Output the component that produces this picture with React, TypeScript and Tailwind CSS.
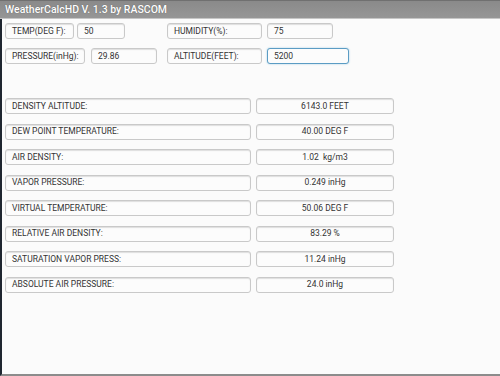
import React from 'react';

const results: [string, string][] = [
    ['DENSITY ALTITUDE:', '6143.0 FEET'],
    ['DEW POINT TEMPERATURE:', '40.00 DEG F'],
    ['AIR DENSITY:', '1.02  kg/m3'],
    ['VAPOR PRESSURE:', '0.249 inHg'],
    ['VIRTUAL TEMPERATURE:', '50.06 DEG F'],
    ['RELATIVE AIR DENSITY:', '83.29 %'],
    ['SATURATION VAPOR PRESS:', '11.24 inHg'],
    ['ABSOLUTE AIR PRESSURE:', '24.0 inHg'],
];

function Box({
    children,
    className = '',
    focused = false,
}: {
    children: React.ReactNode;
    className?: string;
    focused?: boolean;
}) {
    return (
        <div
            className={`flex h-[16px] items-center rounded-[3px] bg-[#fcfcfc] px-[6px] text-[8.5px] leading-none text-[#333] whitespace-pre ${
                focused
                    ? 'border-[1.5px] border-[#5b9cc4] shadow-[0_0_2px_#9cc8e0]'
                    : 'border border-[#c9c9c9] shadow-[inset_0_1px_1px_rgba(0,0,0,0.12)]'
            } ${className}`}
        >
            {children}
        </div>
    );
}

export default function App() {
    return (
        <div
            className="flex h-[376px] w-[500px] flex-col overflow-hidden bg-[#fbfbfb]"
            style={{ fontFamily: 'Roboto, "Liberation Sans", sans-serif' }}
        >
            <div className="flex h-[19px] items-center border-t border-t-[#707070] border-b border-b-[#c6c6c6] bg-gradient-to-b from-[#8a8a8a] to-[#969696] pl-[5px] text-[10.5px] font-medium text-white [text-shadow:0_0_1px_#555]">
                WeatherCalcHD V. 1.3 by RASCOM
            </div>

            <div className="flex flex-1 flex-col border-l-2 border-b-2 border-l-[#1f2630] border-b-[#8c8c8c] pl-[3px] pt-[4px]">
                <div className="flex">
                    <Box className="w-[69px]">TEMP(DEG F):</Box>
                    <Box className="ml-[3px] w-[48px]">50</Box>
                    <Box className="ml-[42px] w-[95px]">HUMIDITY(%):</Box>
                    <Box className="ml-[5px] w-[66px]">75</Box>
                </div>
                <div className="mt-[9px] flex">
                    <Box className="w-[80px]">PRESSURE(inHg):</Box>
                    <Box className="ml-[6px] w-[66px]">29.86</Box>
                    <Box className="ml-[10px] w-[95px]">ALTITUDE(FEET):</Box>
                    <Box focused className="ml-[5px] w-[82px]">5200</Box>
                </div>

                <div className="mt-[34px] flex flex-col gap-[9.5px]">
                    {results.map(([label, value]) => (
                        <div key={label} className="flex">
                            <Box className="w-[246px]">{label}</Box>
                            <Box className="ml-[5px] w-[138px] justify-center">{value}</Box>
                        </div>
                    ))}
                </div>
            </div>
        </div>
    );
}
